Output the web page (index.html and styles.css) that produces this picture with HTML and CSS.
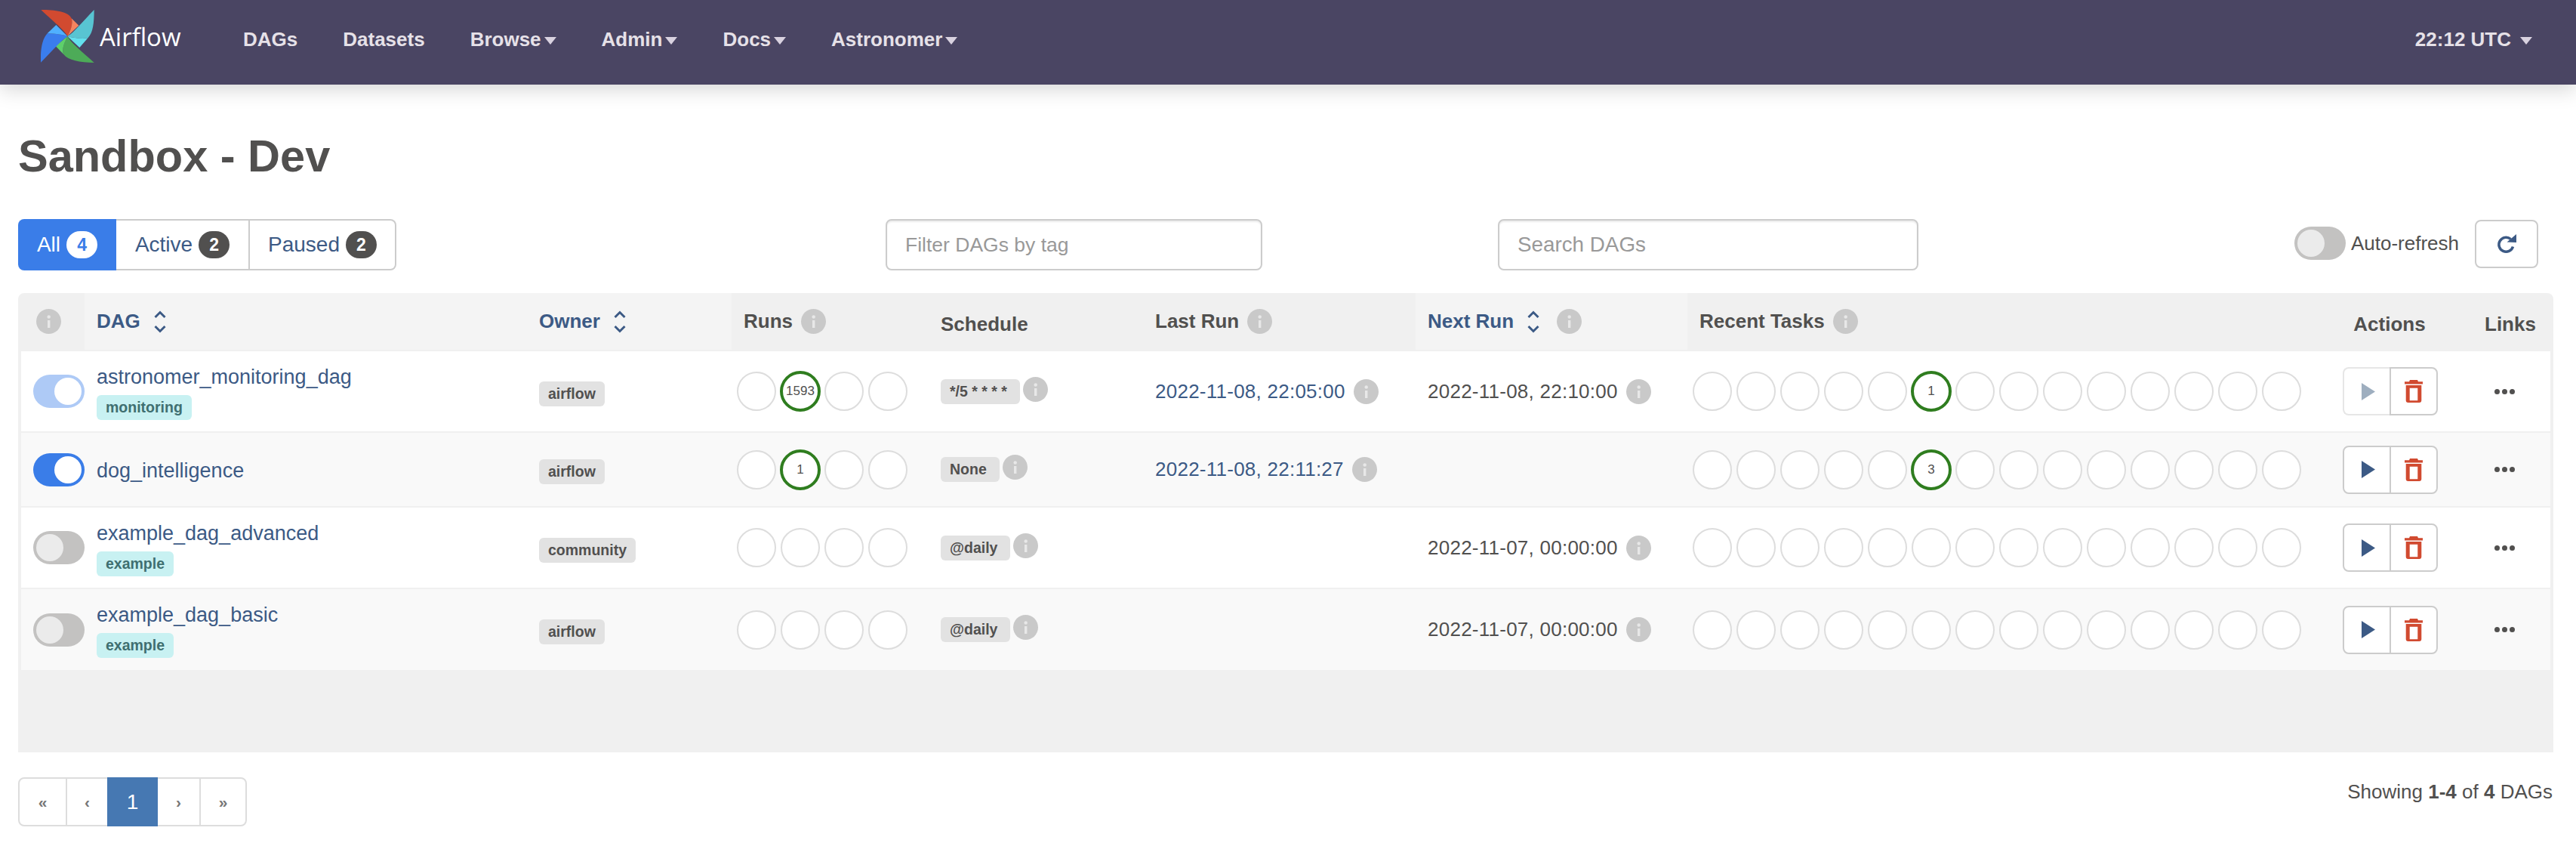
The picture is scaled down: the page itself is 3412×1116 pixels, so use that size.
FILE: index.html
```html
<!DOCTYPE html>
<html lang="en">
<head>
  <meta charset="UTF-8" />
  <title>Airflow - DAGs</title>
  <link rel="stylesheet" href="styles.css">
</head>
<body>
  <svg class="defs" width="0" height="0" aria-hidden="true">
    <symbol id="info" viewBox="0 0 33 33">
      <circle cx="16.5" cy="16.5" r="16.5" fill="#c9c9c9"/>
      <rect x="15" y="15" width="3.4" height="10" fill="#e8e8e8"/>
      <circle cx="16.7" cy="10.5" r="2.2" fill="#e8e8e8"/>
    </symbol>
    <symbol id="sort" viewBox="0 0 16 30">
      <path d="M1.5 9 8 2.5 14.5 9M1.5 21 8 27.5 14.5 21" fill="none" stroke="currentColor" stroke-width="3"/>
    </symbol>
    <symbol id="play" viewBox="0 0 18 23">
      <path d="M0 0 18 11.5 0 23z" fill="currentColor"/>
    </symbol>
    <symbol id="trash" viewBox="0 0 24 30">
      <path d="M7 0h10l1 2.200h6v3.300H0V2.200h6zM1.700 7H22.300V27a3 3 0 0 1-3 3H4.700a3 3 0 0 1-3-3zM6.700 10.700V27.300H17.300V10.700z" fill="currentColor" fill-rule="evenodd"/>
    </symbol>
  </svg>

  <nav class="navbar">
    <a class="brand" href="#">
      <svg class="pinwheel" viewBox="75 38 211 210" width="71" height="70" aria-hidden="true">
        <path d="M75 38C130 38 185 45 196 72 204 92 190 128 180 143 170 120 130 90 75 38z" fill="#d24a30"/>
        <path d="M196 72 225 100 180 143C190 128 204 92 196 72z" fill="#f5845f"/>
        <path d="M286 38C286 90 282 128 262 149 245 155 205 150 180 143 205 130 235 90 286 38z" fill="#58c4d2"/>
        <path d="M262 149 228 188 180 143C205 150 245 155 262 149z" fill="#63e0ee"/>
        <path d="M286 248C230 248 182 238 165 215 155 195 170 165 180 143 195 172 235 200 286 248z" fill="#4dab58"/>
        <path d="M165 215 133 182 180 143C170 165 155 195 165 215z" fill="#5ed06a"/>
        <path d="M73 248C73 200 78 155 100 132 125 132 160 136 180 143 155 160 125 195 73 248z" fill="#3a7ded"/>
        <path d="M100 132 135 98 180 143C160 136 125 132 100 132z" fill="#50b0ff"/>
      </svg>
      <span class="brand-name">Airflow</span>
    </a>
    <ul class="nav-links">
      <li><a href="#">DAGs</a></li>
      <li><a href="#">Datasets</a></li>
      <li><a href="#" class="dropdown">Browse</a></li>
      <li><a href="#" class="dropdown">Admin</a></li>
      <li><a href="#" class="dropdown">Docs</a></li>
      <li><a href="#" class="dropdown">Astronomer</a></li>
    </ul>
    <a class="clock dropdown" href="#">22:12 UTC</a>
  </nav>

  <main class="page">
    <h1>Sandbox - Dev</h1>

    <div class="toolbar">
      <div class="status-filter">
        <a class="status active" href="#">All <span class="count">4</span></a>
        <a class="status" href="#">Active <span class="count">2</span></a>
        <a class="status" href="#">Paused <span class="count">2</span></a>
      </div>
      <input class="tag-filter" type="text" placeholder="Filter DAGs by tag">
      <input class="dag-search" type="text" placeholder="Search DAGs">
      <div class="auto-refresh">
        <span class="switch off"></span>
        <span>Auto-refresh</span>
      </div>
      <button class="refresh" type="button" aria-label="Refresh">
        <svg viewBox="0 0 28 28" width="28" height="28" aria-hidden="true">
          <path d="M22.500 16.500A9.500 9.500 0 1 1 19.500 6.500" fill="none" stroke="currentColor" stroke-width="3.500"/>
          <path d="M14.500 10.500 27 11V0z" fill="currentColor"/>
        </svg>
      </button>
    </div>

    <div class="table-wrap">
      <table class="dags">
        <colgroup>
          <col class="c-toggle"><col class="c-dag"><col class="c-owner"><col class="c-runs"><col class="c-schedule">
          <col class="c-last"><col class="c-next"><col class="c-tasks"><col class="c-actions"><col class="c-links">
        </colgroup>
        <thead>
          <tr>
            <th class="th-info"><svg class="info"><use href="#info"/></svg></th>
            <th class="sorted"><a class="th-in" href="#">DAG <svg class="sort"><use href="#sort"/></svg></a></th>
            <th class="sorted"><a class="th-in" href="#">Owner <svg class="sort"><use href="#sort"/></svg></a></th>
            <th><span class="th-in">Runs <svg class="info"><use href="#info"/></svg></span></th>
            <th class="plain">Schedule</th>
            <th><span class="th-in">Last Run <svg class="info"><use href="#info"/></svg></span></th>
            <th class="sorted"><a class="th-in" href="#">Next Run <svg class="sort"><use href="#sort"/></svg> <svg class="info"><use href="#info"/></svg></a></th>
            <th><span class="th-in">Recent Tasks <svg class="info"><use href="#info"/></svg></span></th>
            <th class="plain center">Actions</th>
            <th class="plain links-head">Links</th>
          </tr>
        </thead>
        <tbody id="rows"></tbody>
      </table>
    </div>

    <div class="footer-row">
      <ul class="pager">
        <li class="p-first"><a href="#">«</a></li>
        <li class="p-step"><a href="#">‹</a></li>
        <li class="current"><a href="#">1</a></li>
        <li class="p-step"><a href="#">›</a></li>
        <li class="p-first"><a href="#">»</a></li>
      </ul>
      <p class="showing">Showing <b>1-4</b> of <b>4</b> DAGs</p>
    </div>
  </main>

  <script src="rows.js"></script>
</body>
</html>
```

FILE: rows.js
```js
const dags = [
  { name: "astronomer_monitoring_dag", tag: "monitoring", owner: "airflow", toggle: "on faded",
    runs: { at: 1, text: "1593" }, schedule: "*/5 * * * *",
    last: "2022-11-08, 22:05:00", next: "2022-11-08, 22:10:00", task: "1", playOff: true, h: "tall" },
  { name: "dog_intelligence", owner: "airflow", toggle: "on",
    runs: { at: 1, text: "1" }, schedule: "None",
    last: "2022-11-08, 22:11:27", task: "3", h: "short" },
  { name: "example_dag_advanced", tag: "example", owner: "community", toggle: "off",
    schedule: "@daily", next: "2022-11-07, 00:00:00", h: "tall" },
  { name: "example_dag_basic", tag: "example", owner: "airflow", toggle: "off",
    schedule: "@daily", next: "2022-11-07, 00:00:00", h: "tall" }
];

const info = '<svg class="info"><use href="#info"/></svg>';

function circles(count, at, text) {
  let html = '<div class="circles">';
  for (let i = 0; i < count; i++) {
    if (i === at) {
      html += `<span class="circle done">${text}</span>`;
    } else {
      html += '<span class="circle"></span>';
    }
  }
  return html + "</div>";
}

function dateCell(value, cls) {
  if (!value) return "<td></td>";
  return `<td><span class="date ${cls}">${value}</span>${info}</td>`;
}

document.getElementById("rows").innerHTML = dags.map((d) => `
  <tr class="${d.h}">
    <td class="td-toggle"><span class="switch ${d.toggle}"></span></td>
    <td>
      <a class="dag-name" href="#">${d.name}</a>
      ${d.tag ? `<span class="label tag">${d.tag}</span>` : ""}
    </td>
    <td><span class="label owner">${d.owner}</span></td>
    <td class="td-circles">${circles(4, d.runs ? d.runs.at : -1, d.runs ? d.runs.text : "")}</td>
    <td><div class="schedule"><span class="label sched">${d.schedule}</span>${info}</div></td>
    ${dateCell(d.last, "link")}
    ${dateCell(d.next, "")}
    <td class="td-circles">${circles(14, d.task ? 5 : -1, d.task || "")}</td>
    <td>
      <div class="actions">
        <button class="act ${d.playOff ? "off" : ""}" type="button"><svg class="play"><use href="#play"/></svg></button>
        <button class="act" type="button"><svg class="trash"><use href="#trash"/></svg></button>
      </div>
    </td>
    <td class="td-links"><span class="dots"><i></i><i></i><i></i></span></td>
  </tr>`).join("");
```

FILE: styles.css
```css
* {
  box-sizing: border-box;
}

body {
  margin: 0;
  background: #fff;
  color: #51504f;
  font-family: "Liberation Sans", Arial, sans-serif;
  font-size: 26px;
  overflow: hidden;
}

a {
  color: #3c5a85;
  text-decoration: none;
}

.defs {
  position: absolute;
}

/* top bar */
.navbar {
  display: flex;
  align-items: center;
  height: 112px;
  padding: 0 58px 8px 54px;
  background: #4a4563;
  box-shadow: 0 8px 24px rgba(0, 0, 0, 0.15);
}

.brand {
  display: flex;
  align-items: center;
  gap: 7px;
  width: 238px;
  margin-bottom: 8px;
}

.brand-name {
  color: #fff;
  font-family: "Open Sans", sans-serif;
  font-size: 33px;
}

.nav-links {
  display: flex;
  list-style: none;
  margin: 0;
  padding: 0;
}

.nav-links a {
  display: block;
  padding: 0 30px;
  color: #e6e1e8;
  font-weight: bold;
}

.dropdown::after {
  content: "";
  display: inline-block;
  margin-left: 4px;
  vertical-align: 2px;
  border-top: 10px solid #d9d2e0;
  border-left: 8px solid transparent;
  border-right: 8px solid transparent;
}

.clock {
  margin-left: auto;
  color: #e6e1e8;
  font-weight: bold;
}

.clock::after {
  margin-left: 12px;
}

/* page */
.page {
  padding: 0 30px 0 24px;
}

h1 {
  margin: 62px 0 0;
  font-size: 59.5px;
  line-height: 66px;
  font-weight: bold;
  color: #51504f;
}

.toolbar {
  display: flex;
  align-items: flex-start;
  height: 68px;
  margin-top: 50px;
  margin-bottom: 30px;
}

.status-filter {
  display: flex;
  width: 501px;
  height: 68px;
}

.status {
  display: flex;
  align-items: center;
  justify-content: center;
  gap: 8px;
  border: 2px solid #ccc;
  border-left-width: 0;
  flex: 0 0 auto;
  font-size: 28px;
}

.status:nth-child(1) {
  width: 130px;
  border: none;
  border-radius: 8px 0 0 8px;
}

.status:nth-child(2) {
  width: 177px;
}

.status:nth-child(3) {
  width: 194px;
  border-radius: 0 8px 8px 0;
}

.status.active {
  background: #3a7de8;
  color: #fff;
}

.count {
  display: inline-block;
  width: 41px;
  border-radius: 20px;
  background: #51504f;
  color: #fff;
  font-size: 23px;
  font-weight: bold;
  line-height: 36px;
  text-align: center;
}

.active .count {
  background: #fff;
  color: #3a7de8;
}

input {
  height: 68px;
  padding: 0 24px;
  border: 2px solid #ccc;
  border-radius: 8px;
  box-shadow: inset 0 2px 2px rgba(0, 0, 0, 0.08);
  font-family: inherit;
}

input::placeholder {
  color: #999;
}

.tag-filter {
  width: 499px;
  margin-left: 648px;
  font-size: 26.5px;
}

.dag-search {
  width: 557px;
  margin-left: 312px;
  font-size: 27.8px;
}

.auto-refresh {
  display: flex;
  align-items: center;
  gap: 7px;
  height: 44px;
  margin: 10px 0 0 auto;
}

.refresh {
  width: 84px;
  height: 64px;
  margin: 1px 20px 0 21px;
  padding: 4px 0 0;
  background: #fff;
  border: 2px solid #ccc;
  border-radius: 8px;
  color: #3c5a85;
}

/* toggle */
.switch {
  display: inline-block;
  position: relative;
  width: 68px;
  height: 44px;
  border-radius: 22px;
  vertical-align: middle;
}

.switch::after {
  content: "";
  position: absolute;
  top: 4px;
  width: 36px;
  height: 36px;
  border-radius: 50%;
}

.switch.on {
  background: #3a7de8;
}

.switch.on::after {
  right: 4px;
  background: #fff;
}

.switch.faded {
  background: #aecaf6;
}

.switch.off {
  background: #c3c2c1;
}

.switch.off::after {
  left: 4px;
  background: #ebebeb;
}

/* table */
.table-wrap {
  height: 608px;
  padding: 0 4px;
  background: #f0f0f0;
  border-radius: 8px 8px 0 0;
}

.dags {
  width: 3350px;
  table-layout: fixed;
  border-collapse: collapse;
}

.c-toggle { width: 84px; }
.c-dag { width: 586px; }
.c-owner { width: 271px; }
.c-runs { width: 261px; }
.c-schedule { width: 284px; }
.c-last { width: 361px; }
.c-next { width: 360px; }
.c-tasks { width: 851px; }
.c-actions { width: 158px; }
.c-links { width: 134px; }

th {
  height: 76px;
  padding: 0 15px 0 16px;
  text-align: left;
  vertical-align: middle;
  font-size: 26px;
  font-weight: bold;
  color: #51504f;
}

th.sorted {
  background: #f4f4f4;
}

th.plain {
  padding-top: 7px;
}

th.center {
  text-align: center;
  padding-left: 0;
  padding-right: 0;
}

th.links-head {
  padding-left: 47px;
  padding-right: 0;
}

th.th-info {
  padding: 0 0 0 20px;
}

.th-in {
  display: flex;
  align-items: center;
  gap: 11px;
  white-space: nowrap;
}

.info {
  display: inline-block;
  flex: none;
  width: 33px;
  height: 33px;
  vertical-align: middle;
}

.sort {
  flex: none;
  width: 16px;
  height: 30px;
  margin-left: 7px;
}

.sort + .info {
  margin-left: 12px;
}

td {
  padding: 0 15px 0 16px;
  border-top: 2px solid #f0f0f0;
  vertical-align: middle;
  background: #fff;
}

tbody tr:nth-child(even) td {
  background: #f9f9f9;
}

tr.tall td {
  height: 108px;
}

tr.short td {
  height: 99px;
}

td.td-toggle {
  padding: 0 0 0 16px;
}

td.td-circles {
  padding: 0 0 0 7px;
}

td.td-links {
  padding-left: 60px;
}

.dag-name {
  display: block;
  font-size: 27px;
  line-height: 32px;
  margin-top: 2px;
  white-space: nowrap;
}

.label {
  display: inline-block;
  padding: 0 12px;
  border-radius: 6px;
  font-size: 19.5px;
  font-weight: bold;
  line-height: 33px;
  white-space: nowrap;
}

.tag {
  margin-top: 8px;
  background: #c8f1f2;
  color: #3f6f70;
}

.owner,
.sched {
  background: #e2e2e2;
  color: #51504f;
}

.owner {
  margin-top: 6px;
}

.sched {
  padding-right: 17px;
}

.schedule {
  display: flex;
  align-items: center;
  gap: 4px;
}

.schedule .info {
  margin-top: -6px;
}

.date {
  margin-right: 11px;
  vertical-align: middle;
  white-space: nowrap;
  letter-spacing: 0.25px;
}

.date.link {
  color: #3c5a85;
}

.circles {
  display: flex;
  align-items: center;
  gap: 6px;
}

.circle {
  display: flex;
  align-items: center;
  justify-content: center;
  flex: none;
  width: 52px;
  height: 52px;
  background: #fff;
  border: 2px solid #ddd;
  border-radius: 50%;
  font-size: 17px;
}

.circle.done {
  width: 54px;
  height: 54px;
  margin: 0 -1px;
  border: 4px solid #2f7d1f;
}

/* buttons in rows */
.actions {
  display: flex;
  justify-content: center;
  padding-left: 1px;
}

.act {
  display: flex;
  align-items: center;
  justify-content: center;
  width: 64px;
  height: 64px;
  padding: 0;
  background: #fff;
  border: 2px solid #ccc;
  color: #3c5a85;
}

.act:first-child {
  padding-left: 4px;
  border-radius: 8px 0 0 8px;
}

.act:last-child {
  margin-left: -2px;
  border-radius: 0 8px 8px 0;
  color: #d14a30;
}

.act.off {
  border-color: #e6e6e6 #ccc #e6e6e6 #e6e6e6;
  color: #9eaebf;
}

.play {
  width: 18px;
  height: 23px;
}

.trash {
  width: 24px;
  height: 30px;
}

.dots {
  display: flex;
  gap: 3px;
}

.dots i {
  width: 7px;
  height: 7px;
  border-radius: 50%;
  background: #51504f;
}

/* footer */
.footer-row {
  display: flex;
  justify-content: space-between;
  align-items: flex-start;
  margin-top: 33px;
}

.pager {
  display: flex;
  height: 65px;
  margin: 0;
  padding: 0;
  list-style: none;
  border: 2px solid #ddd;
  border-radius: 8px;
}

.pager a {
  display: flex;
  align-items: center;
  justify-content: center;
  height: 100%;
  color: #777;
  font-size: 21px;
  font-weight: bold;
}

.pager .p-first {
  width: 61px;
}

.pager .p-step {
  width: 55px;
  border-left: 2px solid #ddd;
}

.pager .p-first:last-child {
  border-left: 2px solid #ddd;
}

.pager .current {
  width: 67px;
  height: 65px;
  margin: -2px 0;
  background: #4678b2;
}

.pager .current + li {
  border-left: none;
}

.pager .current a {
  color: #fff;
  font-weight: normal;
  font-size: 28px;
}

.showing {
  margin: 4px 1px 0 0;
}
```
